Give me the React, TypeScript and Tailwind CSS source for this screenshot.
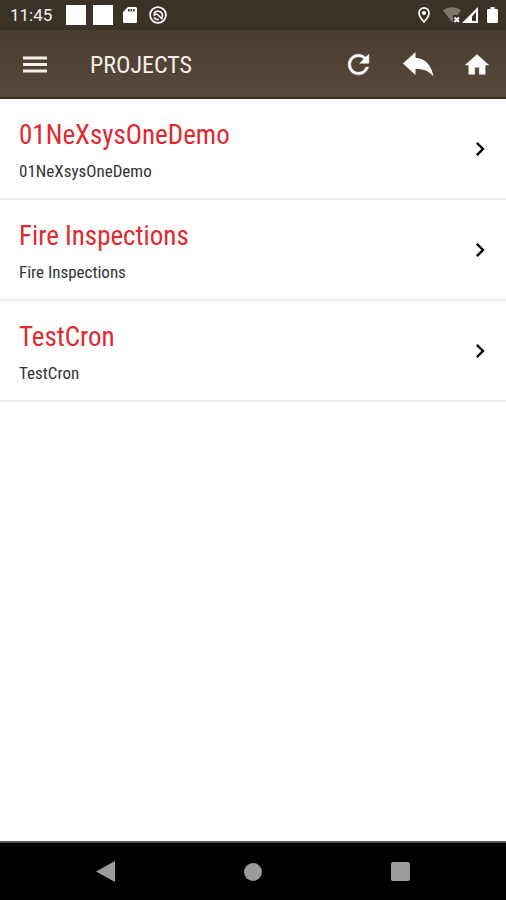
import { MdChevronRight } from "react-icons/md";

type Project = { id: number; name: string; description: string };

const projects: Project[] = [
  { id: 1, name: "01NeXsysOneDemo", description: "01NeXsysOneDemo" },
  { id: 2, name: "Fire Inspections", description: "Fire Inspections" },
  { id: 3, name: "TestCron", description: "TestCron" },
];

function StatusBar() {
  return (
    <div className="flex h-[30px] items-center justify-between bg-[#3a3227] pl-[10px] pr-2 text-white">
      <div className="flex items-center">
        <span className="w-14 font-[Roboto,sans-serif] text-[17px] leading-5 text-[#f3f0ec]">11:45</span>
        <span className="h-5 w-5 bg-white" />
        <span className="ml-[7px] h-5 w-5 bg-white" />
        {/* SD card */}
        <svg className="ml-[10px]" width="14" height="16" viewBox="0 0 14 16">
          <path d="M5 0h7.500a1.500 1.500 0 0 1 1.500 1.500v13a1.500 1.500 0 0 1-1.500 1.500h-11A1.500 1.500 0 0 1 0 14.500V5z" fill="#fff" />
          <path d="M5.800 2v2.500M8.300 2v2.500M10.800 2v2.500" stroke="#3a3227" strokeWidth="1.600" />
        </svg>
        <svg className="ml-3" width="18" height="18" viewBox="0 0 18 18" fill="none" stroke="#fff">
          <circle cx="9" cy="9" r="7.900" strokeWidth="1.800" />
          <path d="M4.800 7.700a4.600 4.600 0 0 1 8.700 1.800c0 1.400-.6 2.300-1.400 3.100M4.600 9.600c2.400-2.600 4.400-1.200 5.300.4l3.600 3.200M5 11.500a4.600 4.600 0 0 0 4.800 2" strokeWidth="1.600" />
        </svg>
      </div>
      <div className="flex items-center">
        <svg width="12" height="16" viewBox="0 0 12 16">
          <path d="M6 .9A5 5 0 0 0 1 5.900C1 9.500 6 14.800 6 14.800S11 9.500 11 5.900a5 5 0 0 0-5-5z" fill="none" stroke="#fff" strokeWidth="1.700" />
          <circle cx="6" cy="6" r="2.100" fill="#fff" />
        </svg>
        {/* Wifi without connection */}
        <svg className="ml-[13px]" width="18" height="16" viewBox="0 0 18 16">
          <path d="M0 3.500C5-.9 13-.9 18 3.500L14.500 8H10v6.200L9 15z" fill="#7b756c" />
          <path d="M11.500 10.500l4.500 4.500M16 10.500l-4.500 4.500" stroke="#fff" strokeWidth="2" />
        </svg>
        <svg className="ml-px" width="17" height="16" viewBox="0 0 17 16">
          <path fillRule="evenodd" d="M16 0v16H0zM14 5l-4 4.500V14h4z" fill="#fff" />
        </svg>
        <svg className="ml-2" width="11" height="16" viewBox="0 0 11 16">
          <path d="M3.500 0h4v2H10a1 1 0 0 1 1 1v12a1 1 0 0 1-1 1H1a1 1 0 0 1-1-1V3a1 1 0 0 1 1-1h2.500z" fill="#fff" />
        </svg>
      </div>
    </div>
  );
}

function Header() {
  return (
    <header className="flex h-[69px] items-center justify-between border-b-2 border-[#3b2e17] bg-linear-to-b from-[#483e30] to-[#574939] pl-[23px] pr-[15px] pt-[2px] text-white">
      <div className="flex items-center">
        <button aria-label="Menu" className="mr-[43px]">
          <svg width="24" height="18" viewBox="0 0 24 18">
            <path d="M0 2h24M0 8.500h24M0 15h24" stroke="#f6efe9" strokeWidth="2.800" />
          </svg>
        </button>
        <h1 className="font-['Roboto_Condensed','Liberation_Sans_Narrow',sans-serif] text-2xl text-[#f6efe9]">PROJECTS</h1>
      </div>
      <div className="flex items-center">
        <button aria-label="Refresh">
          <svg width="31" height="31" viewBox="0 0 24 24" fill="currentColor" stroke="currentColor" strokeWidth="0.4">
            <path d="M17.650 6.350A7.960 7.960 0 0 0 12 4c-4.420 0-7.990 3.580-7.990 8s3.570 8 7.990 8c3.730 0 6.840-2.550 7.730-6h-2.080A5.990 5.990 0 0 1 12 18c-3.310 0-6-2.690-6-6s2.690-6 6-6c1.660 0 3.140.69 4.220 1.780L13 11h7V4z" />
          </svg>
        </button>
        <button aria-label="Back" className="ml-[29px]">
          <svg width="31" height="25" viewBox="0 0 31 25">
            <path d="M0 11.500L12.500 0v5.800C22 6.500 28.500 13 30.500 24.500C26 18.800 20 17 12.500 17v6z" fill="#fff" />
          </svg>
        </button>
        <button aria-label="Home" className="ml-[29px]">
          <svg width="28" height="28" viewBox="0 0 24 24" fill="currentColor" stroke="currentColor" strokeWidth="0.4">
            <path d="M10 20v-6h4v6h5v-8h3L12 3 2 12h3v8z" />
          </svg>
        </button>
      </div>
    </header>
  );
}

function ProjectRow({ project }: { project: Project }) {
  return (
    <li>
      <button className="flex w-full items-center justify-between border-b-2 border-[#ebebeb] py-4 pl-[19px] pr-3 text-left font-['Roboto_Condensed','Liberation_Sans_Narrow',sans-serif]">
        <span className="flex flex-col pt-1">
          <span className="text-[27px] leading-8 text-[#de2a30]">{project.name}</span>
          <span className="mt-[9px] text-[17px] leading-[22px] text-[#333]">{project.description}</span>
        </span>
        <MdChevronRight size={28} className="text-black" />
      </button>
    </li>
  );
}

function NavigationBar() {
  return (
    <nav className="grid h-[59px] grid-cols-[1fr_auto_1fr] items-center border-t-2 border-[#555] bg-black px-24 text-[#9b9b9b]">
      <button aria-label="System back" className="justify-self-start">
        <svg width="19" height="21" viewBox="0 0 19 21">
          <path d="M19 0v21L0 10.500z" fill="currentColor" />
        </svg>
      </button>
      <button aria-label="System home" className="h-[18px] w-[18px] rounded-full bg-[#9b9b9b]" />
      <button aria-label="Recent apps" className="h-[19px] w-[19px] justify-self-end rounded-xs bg-[#9b9b9b]" />
    </nav>
  );
}

export default function App() {
  return (
    <div className="flex min-h-screen flex-col bg-white">
      <StatusBar />
      <Header />
      <main className="flex-1">
        <ul>
          {projects.map((project) => (
            <ProjectRow key={project.id} project={project} />
          ))}
        </ul>
      </main>
      <NavigationBar />
    </div>
  );
}
